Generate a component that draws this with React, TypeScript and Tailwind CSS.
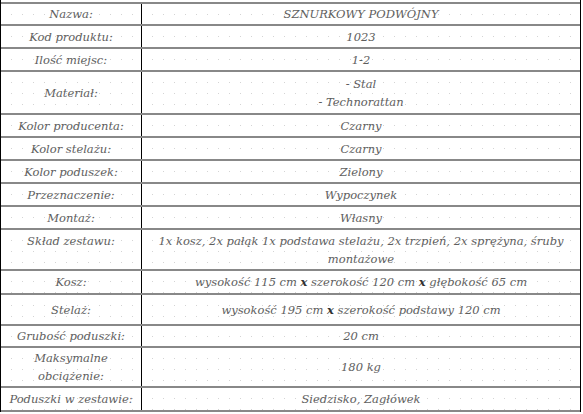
import React from "react";

type Row = { label: React.ReactNode; value: React.ReactNode; h: string; top?: boolean };

const X = () => <b className="font-bold text-[#333]">x</b>;

const rows: Row[] = [
  { label: "Nazwa:", value: "SZNURKOWY PODWÓJNY", h: "h-[22px]" },
  { label: "Kod produktu:", value: "1023", h: "h-[23px]" },
  { label: "Ilość miejsc:", value: "1-2", h: "h-[23px]" },
  {
    label: "Materiał:",
    value: (
      <>
        - Stal
        <br />- Technorattan
      </>
    ),
    h: "h-[43px]",
  },
  { label: "Kolor producenta:", value: "Czarny", h: "h-[23px]" },
  { label: "Kolor stelażu:", value: "Czarny", h: "h-[23px]" },
  { label: "Kolor poduszek:", value: "Zielony", h: "h-[23px]" },
  { label: "Przeznaczenie:", value: "Wypoczynek", h: "h-[23px]" },
  { label: "Montaż:", value: "Własny", h: "h-[23px]" },
  {
    label: "Skład zestawu:",
    value: (
      <>
        1x kosz, 2x pałąk 1x podstawa stelażu, 2x trzpień, 2x sprężyna, śruby
        <br />
        montażowe
      </>
    ),
    h: "h-[41px]",
    top: true,
  },
  {
    label: "Kosz:",
    value: (
      <>
        wysokość 115 cm <X /> szerokość 120 cm <X /> głębokość 65 cm
      </>
    ),
    h: "h-[24px]",
  },
  {
    label: "Stelaż:",
    value: (
      <>
        wysokość 195 cm <X /> szerokość podstawy 120 cm
      </>
    ),
    h: "h-[31px]",
  },
  { label: "Grubość poduszki:", value: "20 cm", h: "h-[22px]" },
  {
    label: (
      <>
        Maksymalne
        <br />
        obciążenie:
      </>
    ),
    value: "180 kg",
    h: "h-[40px]",
  },
  { label: "Poduszki w zestawie:", value: "Siedzisko, Zagłówek", h: "h-[24px]" },
];

const dots =
  "bg-[radial-gradient(circle,#d4d4d4_0.7px,transparent_1px)] bg-[length:11px_11px] bg-[position:5px_5px]";

export default function App() {
  return (
    <div className="h-[414px] w-[583px] bg-white">
      <div
        className="w-[581px] border-x border-black pt-[2px] text-[11.5px] italic text-[#5e5e5e]"
        style={{ fontFamily: '"DejaVu Serif", serif' }}
      >
        <div className="border-t-2 border-[#888]">
          {rows.map((r, i) => (
            <div key={i} className={`flex border-b-2 border-[#888] ${r.h}`}>
              <div
                className={`flex w-[141px] shrink-0 justify-center border-r border-black text-center leading-[18px] ${
                  r.top ? "items-start pt-[2px]" : "items-center"
                } ${dots}`}
              >
                <span className="whitespace-nowrap">{r.label}</span>
              </div>
              <div
                className={`flex flex-1 items-center justify-center text-center leading-[18px] ${dots}`}
              >
                <span className="whitespace-nowrap">{r.value}</span>
              </div>
            </div>
          ))}
        </div>
      </div>
    </div>
  );
}
